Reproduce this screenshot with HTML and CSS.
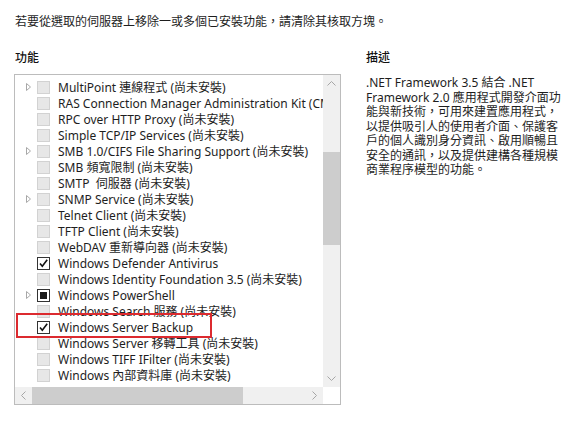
FILE: index.html
```html
<!DOCTYPE html>
<html lang="zh-Hant">
<head>
<meta charset="utf-8">
<title>移除功能</title>
<link rel="stylesheet" href="styles.css">
</head>
<body>
<div class="page">
  <p class="intro">若要從選取的伺服器上移除一或多個已安裝功能，請清除其核取方塊。</p>
  <div class="cols">
    <section class="features">
      <h2 class="heading">功能</h2>
      <div class="listbox">
        <div class="viewport">
          <ul class="tree">
            <li class="row"><span class="exp"><svg width="5" height="8" viewBox="0 0 5 8"><path d="M0.5 0.5 L4.5 4 L0.5 7.5 Z" fill="none" stroke="#a8a8a8" stroke-width="1"/></svg></span><span class="cb"></span><span class="label">MultiPoint 連線程式 (尚未安裝)</span></li>
            <li class="row"><span class="exp"></span><span class="cb"></span><span class="label">RAS Connection Manager Administration Kit (CMAK) (尚未安裝)</span></li>
            <li class="row"><span class="exp"></span><span class="cb"></span><span class="label">RPC over HTTP Proxy (尚未安裝)</span></li>
            <li class="row"><span class="exp"></span><span class="cb"></span><span class="label">Simple TCP/IP Services (尚未安裝)</span></li>
            <li class="row"><span class="exp"><svg width="5" height="8" viewBox="0 0 5 8"><path d="M0.5 0.5 L4.5 4 L0.5 7.5 Z" fill="none" stroke="#a8a8a8" stroke-width="1"/></svg></span><span class="cb"></span><span class="label">SMB 1.0/CIFS File Sharing Support (尚未安裝)</span></li>
            <li class="row"><span class="exp"></span><span class="cb"></span><span class="label">SMB 頻寬限制 (尚未安裝)</span></li>
            <li class="row"><span class="exp"></span><span class="cb"></span><span class="label">SMTP&nbsp; 伺服器 (尚未安裝)</span></li>
            <li class="row"><span class="exp"><svg width="5" height="8" viewBox="0 0 5 8"><path d="M0.5 0.5 L4.5 4 L0.5 7.5 Z" fill="none" stroke="#a8a8a8" stroke-width="1"/></svg></span><span class="cb"></span><span class="label">SNMP Service (尚未安裝)</span></li>
            <li class="row"><span class="exp"></span><span class="cb"></span><span class="label">Telnet Client (尚未安裝)</span></li>
            <li class="row"><span class="exp"></span><span class="cb"></span><span class="label">TFTP Client (尚未安裝)</span></li>
            <li class="row"><span class="exp"></span><span class="cb"></span><span class="label">WebDAV 重新導向器 (尚未安裝)</span></li>
            <li class="row"><span class="exp"></span><span class="cb checked"><svg width="11" height="11" viewBox="0 0 11 11"><path d="M2 5.5 L4.3 8.2 L9.2 1.8" fill="none" stroke="#111" stroke-width="1.6"/></svg></span><span class="label">Windows Defender Antivirus</span></li>
            <li class="row"><span class="exp"></span><span class="cb"></span><span class="label">Windows Identity Foundation 3.5 (尚未安裝)</span></li>
            <li class="row"><span class="exp"><svg width="5" height="8" viewBox="0 0 5 8"><path d="M0.5 0.5 L4.5 4 L0.5 7.5 Z" fill="none" stroke="#a8a8a8" stroke-width="1"/></svg></span><span class="cb partial"><span class="fill"></span></span><span class="label">Windows PowerShell</span></li>
            <li class="row"><span class="exp"></span><span class="cb"></span><span class="label">Windows Search 服務 (尚未安裝)</span></li>
            <li class="row"><span class="exp"></span><span class="cb checked"><svg width="11" height="11" viewBox="0 0 11 11"><path d="M2 5.5 L4.3 8.2 L9.2 1.8" fill="none" stroke="#111" stroke-width="1.6"/></svg></span><span class="label">Windows Server Backup</span></li>
            <li class="row"><span class="exp"></span><span class="cb"></span><span class="label">Windows Server 移轉工具 (尚未安裝)</span></li>
            <li class="row"><span class="exp"></span><span class="cb"></span><span class="label">Windows TIFF IFilter (尚未安裝)</span></li>
            <li class="row"><span class="exp"></span><span class="cb"></span><span class="label">Windows 內部資料庫 (尚未安裝)</span></li>
          </ul>
        </div>
        <div class="vscroll">
          <div class="sbtn"><svg width="9" height="5" viewBox="0 0 9 5"><path d="M0.5 4.5 L4.5 0.5 L8.5 4.5" fill="none" stroke="#a6a6a6" stroke-width="1"/></svg></div>
          <div class="vtrack"><div class="vthumb"></div></div>
          <div class="sbtn"><svg width="9" height="5" viewBox="0 0 9 5"><path d="M0.5 0.5 L4.5 4.5 L8.5 0.5" fill="none" stroke="#a6a6a6" stroke-width="1"/></svg></div>
        </div>
        <div class="hscroll">
          <div class="sbtn"><svg width="5" height="9" viewBox="0 0 5 9"><path d="M4.5 0.5 L0.5 4.5 L4.5 8.5" fill="none" stroke="#a6a6a6" stroke-width="1"/></svg></div>
          <div class="htrack"><div class="hthumb"></div></div>
          <div class="sbtn"><svg width="5" height="9" viewBox="0 0 5 9"><path d="M0.5 0.5 L4.5 4.5 L0.5 8.5" fill="none" stroke="#a6a6a6" stroke-width="1"/></svg></div>
        </div>
        <div class="corner"></div>
        <div class="highlight"></div>
      </div>
    </section>
    <section class="desc">
      <h2 class="heading">描述</h2>
      <p class="desc-text">.NET Framework 3.5 結合 .NET<br>Framework 2.0 應用程式開發介面功<br>能與新技術，可用來建置應用程式，<br>以提供吸引人的使用者介面、保護客<br>戶的個人識別身分資訊、啟用順暢且<br>安全的通訊，以及提供建構各種規模<br>商業程序模型的功能。</p>
    </section>
  </div>
</div>
</body>
</html>
```

FILE: styles.css
```css
html, body {
  margin: 0;
  padding: 0;
  background: #ffffff;
}

body {
  font-family: "Noto Sans", "Noto Sans CJK TC", sans-serif;
  font-size: 12px;
  color: #1e1e1e;
}

.page {
  padding: 14px 0 0 15px;
}

.intro {
  margin: 0;
  line-height: 16px;
}

.cols {
  display: grid;
  grid-template-columns: 327px 210px;
  column-gap: 24px;
  margin-top: 20px;
}

.heading {
  margin: 0;
  font-size: 12px;
  font-weight: 500;
  line-height: 16px;
  color: #111;
}

.features .listbox {
  margin-top: 8px;
  margin-left: -1px;
}

.listbox {
  position: relative;
  display: grid;
  grid-template-columns: 308px 17px;
  grid-template-rows: 312px 17px;
  border: 1px solid #bcbcbc;
  width: 325px;
}

.viewport {
  overflow: hidden;
  padding-top: 4px;
  box-sizing: border-box;
}

.tree {
  list-style: none;
  margin: 0;
  padding: 0;
}

.row {
  display: flex;
  align-items: center;
  height: 16px;
  padding-left: 11px;
  white-space: nowrap;
}

.exp {
  width: 11px;
  flex: none;
  display: flex;
  align-items: center;
}

.exp svg {
  display: block;
}

.cb {
  flex: none;
  width: 11px;
  height: 11px;
  border: 1px solid #d2d2d2;
  background: #e7e7e7;
  margin-right: 8px;
  display: flex;
  align-items: center;
  justify-content: center;
}

.cb.checked,
.cb.partial {
  background: #ffffff;
  border-color: #333333;
}

.cb .fill {
  width: 7px;
  height: 7px;
  background: #1a1a1a;
}

.label {
  flex: none;
}

.vscroll {
  display: flex;
  flex-direction: column;
  background: #f0f0f0;
}

.hscroll {
  display: flex;
  background: #f0f0f0;
}

.sbtn {
  flex: none;
  width: 17px;
  height: 17px;
  display: flex;
  align-items: center;
  justify-content: center;
}

.vtrack {
  flex: 1;
}

.vthumb {
  margin-top: 60px;
  height: 93px;
  background: #cdcdcd;
}

.htrack {
  flex: 1;
  display: flex;
}

.hthumb {
  width: 211px;
  background: #cdcdcd;
}

.corner {
  background: #ffffff;
}

.highlight {
  position: absolute;
  left: 1px;
  top: 238px;
  width: 192px;
  height: 21px;
  border: 2px solid #dc2a2f;
}

.desc-text {
  margin: 10px 0 0;
  line-height: 14.5px;
}
```
